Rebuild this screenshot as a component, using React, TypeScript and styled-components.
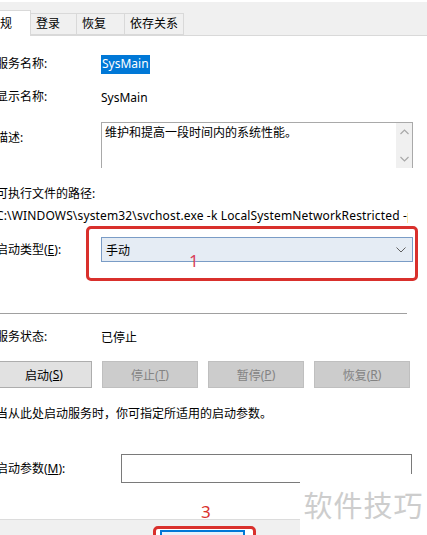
import React from "react";
import styled, { createGlobalStyle } from "styled-components";

const GlobalStyle = createGlobalStyle`
	html, body {
		margin: 0;
		padding: 0;
		background: #ffffff;
	}
	body {
		width: 427px;
		height: 535px;
		overflow: hidden;
		font-family: "Noto Sans", "Noto Sans CJK SC", sans-serif;
		font-size: 12px;
		color: #000000;
	}
`;

const Window = styled.div`
	position: relative;
	width: 427px;
	height: 535px;
	overflow: hidden;
	background: #ffffff;
`;

const TabStrip = styled.div`
	display: flex;
	align-items: flex-end;
	height: 33px;
	margin-top: 2px;
	background: #f0f0f0;
	border-bottom: 1px solid #d9d9d9;
`;

const Tab = styled.div<{ $active?: boolean; $w: number }>`
	display: flex;
	align-items: center;
	box-sizing: border-box;
	width: ${(p) => p.$w}px;
	height: ${(p) => (p.$active ? 26 : 22)}px;
	margin-bottom: ${(p) => (p.$active ? -1 : 0)}px;
	margin-left: ${(p) => (p.$active ? -13 : 0)}px;
	padding-left: ${(p) => (p.$active ? 0 : 5)}px;
	background: ${(p) => (p.$active ? "#ffffff" : "#f0f0f0")};
	border: 1px solid #d9d9d9;
	border-bottom: ${(p) => (p.$active ? "none" : "1px solid #d9d9d9")};
	border-left: ${(p) => (p.$active ? "1px solid #d9d9d9" : "none")};
	white-space: nowrap;
	line-height: 1;
`;

const Panel = styled.div`
	display: flex;
	flex-direction: column;
	margin-left: -4px;
`;

const Row = styled.div<{ $top: number; $h: number; $start?: boolean }>`
	display: flex;
	align-items: ${(p) => (p.$start ? "flex-start" : "center")};
	margin-top: ${(p) => p.$top}px;
	height: ${(p) => p.$h}px;
	white-space: nowrap;
`;

const PathRow = styled(Row)`
	width: 412px;
	overflow: hidden;
	letter-spacing: 0.15px;
`;

const Label = styled.div<{ $w?: number; $pt?: number }>`
	flex: none;
	width: ${(p) => p.$w ?? 105}px;
	padding-top: ${(p) => p.$pt ?? 0}px;
	line-height: 20px;
`;

const Selected = styled.span`
	background: #0078d7;
	color: #ffffff;
	padding: 1px 1px 2px;
	line-height: 16px;
`;

const TextBox = styled.div`
	display: flex;
	box-sizing: border-box;
	width: 312px;
	height: 46px;
	border: 1px solid #a9a9a9;
	border-bottom: none;
`;

const TextBody = styled.div`
	flex: 1;
	padding: 2px 3px;
	line-height: 16px;
`;

const ScrollBar = styled.div`
	display: flex;
	flex-direction: column;
	justify-content: space-between;
	align-items: center;
	width: 16px;
	padding: 6px 0 6px;
	background: #f0f0f0;
	box-sizing: border-box;
`;

const Select = styled.div`
	position: relative;
	display: flex;
	align-items: center;
	justify-content: space-between;
	box-sizing: border-box;
	width: 312px;
	height: 25px;
	padding: 0 6px 0 4px;
	background: #e5ecf4;
	border: 1px solid #7a9cc6;
`;

const Annotation = styled.div`
	position: absolute;
	left: -16px;
	top: -12px;
	width: 332px;
	height: 55px;
	box-sizing: border-box;
	border: 3px solid #d9302c;
	border-radius: 5px;
	pointer-events: none;
`;

const Mark = styled.span<{ $x: number; $y: number; $color?: string }>`
	position: absolute;
	left: ${(p) => p.$x}px;
	top: ${(p) => p.$y}px;
	color: ${(p) => p.$color ?? "#d8405a"};
	font-size: 17px;
	font-family: "Noto Sans", sans-serif;
	line-height: 1;
`;

const Separator = styled.div`
	margin-top: 51px;
	margin-left: 4px;
	width: 407px;
	height: 1px;
	background: #a0a0a0;
`;

const ButtonRow = styled.div`
	display: grid;
	grid-template-columns: repeat(4, 96px);
	column-gap: 10px;
	margin-top: 14px;
	height: 27px;
`;

const Button = styled.div<{ $disabled?: boolean }>`
	display: flex;
	align-items: center;
	justify-content: center;
	box-sizing: border-box;
	background: ${(p) => (p.$disabled ? "#cccccc" : "#e1e1e1")};
	border: 1px solid ${(p) => (p.$disabled ? "#bfbfbf" : "#adadad")};
	color: ${(p) => (p.$disabled ? "#838383" : "#000000")};
`;

const Input = styled.div`
	box-sizing: border-box;
	width: 291px;
	height: 29px;
	border: 1px solid #7a7a7a;
`;

const Footer = styled.div`
	position: relative;
	margin-top: 36px;
	height: 20px;
	background: #f0f0f0;
	border-top: 1px solid #dcdcdc;
`;

const OkFrame = styled.div`
	position: absolute;
	left: 153px;
	top: 6px;
	width: 103px;
	height: 20px;
	box-sizing: border-box;
	border: 3px solid #d9302c;
	border-radius: 5px;
	background: #ffffff;
`;

const OkButton = styled.div`
	position: absolute;
	left: 160px;
	top: 10px;
	width: 85px;
	height: 20px;
	box-sizing: border-box;
	background: #e5f1fb;
	border: 2px solid #0078d7;
`;

const Watermark = styled.div`
	position: absolute;
	left: 300px;
	top: 474px;
	width: 127px;
	height: 61px;
	display: flex;
	align-items: center;
	justify-content: center;
	padding-bottom: 2px;
	box-sizing: border-box;
	background: #ffffff;
	color: #cdcdcd;
	font-size: 29px;
	letter-spacing: 1px;
	white-space: nowrap;
`;

const Chevron = ({ up }: { up?: boolean }) => (
	<svg width="9" height="6" viewBox="0 0 9 6">
		<path
			d={up ? "M0.5 5 L4.5 1 L8.5 5" : "M0.5 1 L4.5 5 L8.5 1"}
			fill="none"
			stroke="#a8a8a8"
			strokeWidth="1.2"
		/>
	</svg>
);

export default function App() {
	return (
		<Window>
			<GlobalStyle />
			<TabStrip>
				<Tab $active $w={44}>常规</Tab>
				<Tab $w={46}>登录</Tab>
				<Tab $w={48}>恢复</Tab>
				<Tab $w={59}>依存关系</Tab>
			</TabStrip>
			<Panel>
				<Row $top={18} $h={20}>
					<Label>服务名称:</Label>
					<Selected>SysMain</Selected>
				</Row>
				<Row $top={13} $h={20}>
					<Label>显示名称:</Label>
					<span>SysMain</span>
				</Row>
				<Row $top={15} $h={46} $start>
					<Label $pt={6}>描述:</Label>
					<TextBox>
						<TextBody>维护和提高一段时间内的系统性能。</TextBody>
						<ScrollBar>
							<Chevron up />
							<Chevron />
						</ScrollBar>
					</TextBox>
				</Row>
				<Row $top={15} $h={20}>
					<span>可执行文件的路径:</span>
				</Row>
				<PathRow $top={2} $h={20}>
					<span>C:\WINDOWS\system32\svchost.exe -k LocalSystemNetworkRestricted -p</span>
				</PathRow>
				<Row $top={12} $h={25}>
					<Label>启动类型(<u>E</u>):</Label>
					<Select>
						<span>手动</span>
						<svg width="10" height="6" viewBox="0 0 10 6">
							<path d="M0.5 0.5 L5 5 L9.5 0.5" fill="none" stroke="#606060" strokeWidth="1" />
						</svg>
						<Annotation />
						<Mark $x={87} $y={14}>1</Mark>
					</Select>
				</Row>
				<Separator />
				<Row $top={13} $h={20}>
					<Label>服务状态:</Label>
					<span>已停止</span>
				</Row>
				<ButtonRow>
					<Button>启动(<u>S</u>)</Button>
					<Button $disabled>停止(<u>T</u>)</Button>
					<Button $disabled>暂停(<u>P</u>)</Button>
					<Button $disabled>恢复(<u>R</u>)</Button>
				</ButtonRow>
				<Row $top={15} $h={20}>
					<span>当从此处启动服务时，你可指定所适用的启动参数。</span>
				</Row>
				<Row $top={31} $h={29}>
					<Label $w={125}>启动参数(<u>M</u>):</Label>
					<Input />
				</Row>
			</Panel>
			<Footer>
				<Mark $x={201} $y={-17} $color="#d9302c">3</Mark>
				<OkFrame />
				<OkButton />
			</Footer>
			<Watermark>软件技巧</Watermark>
		</Window>
	);
}
